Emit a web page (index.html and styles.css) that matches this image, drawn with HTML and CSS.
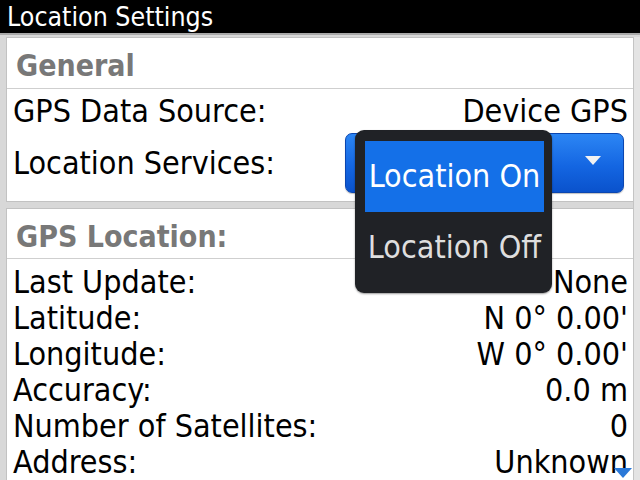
FILE: index.html
```html
<!DOCTYPE html>
<html>
<head>
<meta charset="utf-8">
<link rel="stylesheet" href="styles.css">
</head>
<body>
<div class="screen">
  <header class="titlebar">Location Settings</header>
  <div class="main">
    <div class="content">
      <section class="card">
        <div class="card-head">General</div>
        <div class="row row-first">
          <span class="label">GPS Data Source:</span>
          <span class="value">Device GPS</span>
        </div>
        <div class="row row-select">
          <span class="label">Location Services:</span>
          <div class="select">
            <span class="caret"></span>
          </div>
        </div>
      </section>
      <section class="card card-2">
        <div class="card-head head-2">GPS Location:</div>
        <div class="list">
          <div class="line"><span class="label">Last Update:</span><span class="value">None</span></div>
          <div class="line"><span class="label">Latitude:</span><span class="value">N 0° 0.00'</span></div>
          <div class="line"><span class="label">Longitude:</span><span class="value">W 0° 0.00'</span></div>
          <div class="line"><span class="label">Accuracy:</span><span class="value">0.0 m</span></div>
          <div class="line"><span class="label">Number of Satellites:</span><span class="value">0</span></div>
          <div class="line"><span class="label">Address:</span><span class="value">Unknown</span></div>
        </div>
      </section>
    </div>
    <div class="scrollbar"></div>
  </div>
  <div class="popup">
    <div class="opt opt-on">Location On</div>
    <div class="opt opt-off">Location Off</div>
  </div>
  <span class="more-arrow"></span>
</div>
</body>
</html>
```

FILE: styles.css
```css
* { box-sizing: border-box; }
html, body {
  margin: 0;
  padding: 0;
  width: 640px;
  height: 480px;
  overflow: hidden;
  background: #d8d8d8;
}
.screen {
  position: relative;
  width: 640px;
  height: 480px;
  overflow: hidden;
  font-family: "DejaVu Sans", sans-serif;
  font-stretch: condensed;
  color: #000;
}
.titlebar {
  height: 35px;
  background: #000;
  color: #fff;
  font-size: 26.5px;
  line-height: 33px;
  padding-left: 7px;
  border-bottom: 2px solid #a9a9a9;
  white-space: nowrap;
}
.main {
  display: flex;
  padding-top: 2px;
}
.content {
  flex: 0 0 633px;
  padding-left: 6px;
}
.scrollbar {
  flex: 1;
  background: #e4e4e4;
  border-left: 1px solid #c4c4c4;
  height: 460px;
}
.card {
  background: #fff;
  border: 1px solid #c2c2c2;
  border-right: none;
}
.card-2 {
  margin-top: 6px;
}
.card-head {
  padding: 6px 0 0 9px;
  height: 51px;
  line-height: 44px;
  font-size: 30px;
  font-weight: bold;
  color: #787878;
  border-bottom: 1px solid #cfcfcf;
  white-space: nowrap;
}
.head-2 {
  height: 50px;
  line-height: 43px;
}
.row {
  display: flex;
  align-items: center;
  justify-content: space-between;
  padding: 0 5px 0 6px;
  font-size: 32px;
  white-space: nowrap;
}
.row-first {
  height: 44px;
}
.row-select {
  height: 68px;
  padding-bottom: 8px;
  padding-right: 9px;
}
.select {
  width: 279px;
  height: 60px;
  border-radius: 7px;
  border: 1px solid #0b46b0;
  background: linear-gradient(#2c86f4, #1466e2 55%, #0a52cc);
  position: relative;
  display: flex;
  align-items: center;
  justify-content: flex-end;
  padding-right: 22px;
  box-shadow: 0 1px 1px rgba(0,0,0,0.25);
}
.caret {
  width: 0;
  height: 0;
  border-left: 8px solid transparent;
  border-right: 8px solid transparent;
  border-top: 9px solid #f2f2f2;
  margin-top: -6px;
}
.list {
  padding: 5px 5px 0 6px;
}
.line {
  display: flex;
  justify-content: space-between;
  height: 36px;
  line-height: 36px;
  font-size: 32px;
  white-space: nowrap;
}
.popup {
  position: absolute;
  left: 355px;
  top: 130px;
  width: 197px;
  height: 163px;
  background: #202226;
  border-radius: 9px;
  padding: 11px 8px 10px 10px;
  box-shadow: 0 1px 2px rgba(0,0,0,0.4);
}
.opt {
  height: 71px;
  line-height: 71px;
  text-align: center;
  font-size: 32px;
  white-space: nowrap;
  overflow: visible;
}
.opt-on {
  background: #1470e8;
  color: #fff;
}
.opt-off {
  color: #dedede;
}
.more-arrow {
  position: absolute;
  left: 614px;
  top: 468px;
  width: 0;
  height: 0;
  border-left: 9px solid transparent;
  border-right: 9px solid transparent;
  border-top: 10px solid #2a78d8;
}
```
